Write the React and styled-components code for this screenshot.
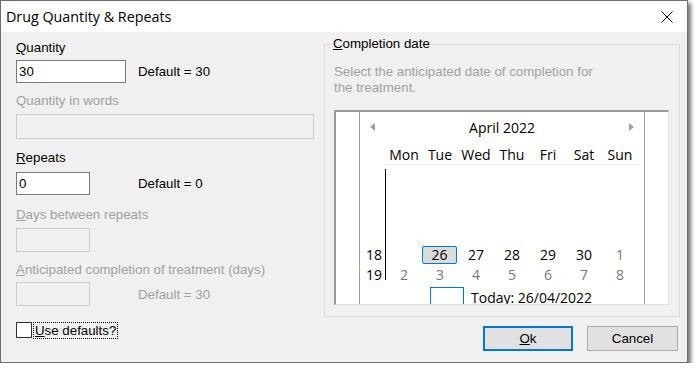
import React from 'react';
import styled, { createGlobalStyle } from 'styled-components';

const GlobalStyle = createGlobalStyle`
  body {
    margin: 0;
    background: #fff;
    font-family: "Liberation Sans", Arial, sans-serif;
  }
`;

const calFont = `"Open Sans", "Noto Sans", sans-serif`;

const Window = styled.div`
  width: 688px;
  height: 363px;
  box-sizing: border-box;
  border: 1px solid #6e6e6e;
  box-shadow: 3px 3px 4px rgba(0, 0, 0, 0.55);
  background: #f0f0f0;
  display: flex;
  flex-direction: column;
`;

const TitleBar = styled.div`
  height: 31px;
  flex: none;
  background: #fff;
  display: flex;
  align-items: center;
  justify-content: space-between;
  padding: 0 14px 0 5px;
  font-family: ${calFont};
  font-size: 14.3px;
  color: #000;
`;

const Body = styled.div`
  flex: 1;
  display: flex;
`;

const LeftColumn = styled.div`
  width: 323px;
  box-sizing: border-box;
  padding: 8px 0 0 15px;
`;

const Label = styled.div`
  font-size: 13.3px;
  line-height: 16px;
  height: 16px;
  color: ${p => (p.$disabled ? '#a0a0a0' : '#000')};
  margin-top: ${p => p.$gap || 0}px;
  white-space: nowrap;
`;

const InputRow = styled.div`
  display: grid;
  grid-template-columns: 122px auto;
  align-items: center;
  margin-top: ${p => p.$gap || 0}px;
`;

const TextBox = styled.div`
  box-sizing: border-box;
  width: ${p => p.$w}px;
  height: ${p => p.$h || 23}px;
  border: 1px solid ${p => (p.$disabled ? '#cccccc' : '#7a7a7a')};
  background: ${p => (p.$disabled ? '#f0f0f0' : '#fff')};
  font-size: 13.3px;
  line-height: 21px;
  padding-left: 2px;
`;

const Hint = styled.span`
  font-size: 13.3px;
  color: ${p => (p.$disabled ? '#a0a0a0' : '#000')};
`;

const CheckRow = styled.div`
  display: flex;
  align-items: center;
  gap: 2px;
  margin-top: 16px;
`;

const CheckBox = styled.div`
  width: 16px;
  height: 16px;
  box-sizing: border-box;
  border: 1px solid #333;
  background: #fff;
`;

const CheckLabel = styled.span`
  font-size: 13.3px;
  line-height: 15px;
  padding: 0 1px;
  outline: 1px dotted #000;
  outline-offset: 0;
`;

const RightColumn = styled.div`
  flex: 1;
  display: flex;
  flex-direction: column;
  padding-right: 7px;
`;

const GroupBox = styled.fieldset`
  margin: 4px 0 0 0;
  padding: 0 10px 11px 9px;
  border: 1px solid #dcdcdc;
  min-inline-size: 0;
`;

const Legend = styled.legend`
  font-size: 13.3px;
  line-height: 16px;
  padding: 0 2px;
  margin-left: -3px;
`;

const Description = styled.div`
  margin-top: 12px;
  font-size: 13.3px;
  line-height: 16px;
  color: #a0a0a0;
`;

const Calendar = styled.div`
  margin-top: 14px;
  width: 335px;
  height: 195px;
  box-sizing: border-box;
  border-top: 2px solid #9a9a9a;
  border-left: 2px solid #9a9a9a;
  border-right: 1px solid #e3e3e3;
  border-bottom: 1px solid #e3e3e3;
  background: #fff;
  display: flex;
  overflow: hidden;
`;

const Strip = styled.div`
  width: 23px;
  flex: none;
`;

const MonthPanel = styled.div`
  width: 286px;
  box-sizing: border-box;
  border-left: 1px solid #a0a0a0;
  border-right: 1px solid #a0a0a0;
  padding-top: 4px;
  font-family: ${calFont};
  font-size: 14px;
  color: #000;
`;

const MonthRow = styled.div`
  height: 22px;
  display: flex;
  align-items: center;
  justify-content: space-between;
  padding: 0 10px;
`;

const Arrow = styled.span`
  width: 0;
  height: 0;
  border-top: 4.5px solid transparent;
  border-bottom: 4.5px solid transparent;
  ${p => (p.$dir === 'left' ? 'border-right' : 'border-left')}: 5px solid #a0a0a0;
`;

const Grid = styled.div`
  display: grid;
  grid-template-columns: 26px repeat(7, 36px);
`;

const HeaderGrid = styled(Grid)`
  margin-top: 8px;
`;

const HeadCell = styled.div`
  height: 18px;
  line-height: 18px;
  text-align: center;
  border-bottom: ${p => (p.$blank ? 'none' : '1px solid #ebebeb')};
`;

const Weeks = styled.div`
  position: relative;

  &::before {
    content: '';
    position: absolute;
    left: 25px;
    top: 4px;
    bottom: 5px;
    width: 1px;
    background: #000;
  }
`;

const WeekRow = styled(Grid)`
  height: 20px;
  line-height: 20px;
`;

const WeekNum = styled.div`
  text-align: right;
  padding-right: 4px;
`;

const Day = styled.div`
  text-align: center;
  color: ${p => (p.$muted ? '#777' : '#000')};
`;

const Selected = styled.div`
  box-sizing: border-box;
  width: 35px;
  height: 18px;
  margin-top: 1px;
  line-height: 16px;
  background: #dcdcdc;
  border: 1px solid #0078d7;
  border-radius: 2px;
`;

const TodayRow = styled.div`
  display: flex;
  align-items: center;
  margin-top: 2px;
  padding-left: 70px;
`;

const TodayBox = styled.div`
  width: 34px;
  height: 20px;
  box-sizing: border-box;
  border: 1px solid #0078d7;
`;

const TodayText = styled.span`
  margin-left: 7px;
`;

const ButtonRow = styled.div`
  display: flex;
  justify-content: flex-end;
  gap: 14px;
  margin-top: 9px;
  padding-right: 2px;
`;

const Button = styled.div`
  box-sizing: border-box;
  width: ${p => p.$w}px;
  height: 25px;
  display: flex;
  align-items: center;
  justify-content: center;
  background: #e1e1e1;
  border: ${p => (p.$default ? '2px solid #0078d7' : '1px solid #adadad')};
  font-size: 13.3px;
`;

const days = ['Mon', 'Tue', 'Wed', 'Thu', 'Fri', 'Sat', 'Sun'];

function CloseIcon() {
  return (
    <svg width="12" height="12" viewBox="0 0 12 12">
      <path d="M0.5 0.5 L11.5 11.5 M11.5 0.5 L0.5 11.5" stroke="#000" strokeWidth="1" />
    </svg>
  );
}

export default function App() {
  return (
    <>
      <GlobalStyle />
      <Window>
        <TitleBar>
          <span>Drug Quantity &amp; Repeats</span>
          <CloseIcon />
        </TitleBar>
        <Body>
          <LeftColumn>
            <Label><u>Q</u>uantity</Label>
            <InputRow $gap={4}>
              <TextBox $w={110}>30</TextBox>
              <Hint>Default = 30</Hint>
            </InputRow>
            <Label $disabled $gap={10}>Quantity in words</Label>
            <InputRow $gap={5}>
              <TextBox $w={298} $h={25} $disabled />
            </InputRow>
            <Label $gap={11}><u>R</u>epeats</Label>
            <InputRow $gap={6}>
              <TextBox $w={74}>0</TextBox>
              <Hint>Default = 0</Hint>
            </InputRow>
            <Label $disabled $gap={12}><u>D</u>ays between repeats</Label>
            <InputRow $gap={5}>
              <TextBox $w={74} $h={24} $disabled />
            </InputRow>
            <Label $disabled $gap={10}><u>A</u>nticipated completion of treatment (days)</Label>
            <InputRow $gap={4}>
              <TextBox $w={74} $h={24} $disabled />
              <Hint $disabled>Default = 30</Hint>
            </InputRow>
            <CheckRow>
              <CheckBox />
              <CheckLabel><u>U</u>se defaults?</CheckLabel>
            </CheckRow>
          </LeftColumn>
          <RightColumn>
            <GroupBox>
              <Legend><u>C</u>ompletion date</Legend>
              <Description>
                Select the anticipated date of completion for
                <br />
                the treatment.
              </Description>
              <Calendar>
                <Strip />
                <MonthPanel>
                  <MonthRow>
                    <Arrow $dir="left" />
                    <span>April 2022</span>
                    <Arrow $dir="right" />
                  </MonthRow>
                  <HeaderGrid>
                    <HeadCell $blank />
                    {days.map(d => (
                      <HeadCell key={d}>{d}</HeadCell>
                    ))}
                  </HeaderGrid>
                  <Weeks>
                    {[14, 15, 16, 17].map(w => (
                      <WeekRow key={w} />
                    ))}
                    <WeekRow>
                      <WeekNum>18</WeekNum>
                      <Day />
                      <Day><Selected>26</Selected></Day>
                      <Day>27</Day>
                      <Day>28</Day>
                      <Day>29</Day>
                      <Day>30</Day>
                      <Day $muted>1</Day>
                    </WeekRow>
                    <WeekRow>
                      <WeekNum>19</WeekNum>
                      {[2, 3, 4, 5, 6, 7, 8].map(n => (
                        <Day key={n} $muted>{n}</Day>
                      ))}
                    </WeekRow>
                  </Weeks>
                  <TodayRow>
                    <TodayBox />
                    <TodayText>Today: 26/04/2022</TodayText>
                  </TodayRow>
                </MonthPanel>
                <Strip />
              </Calendar>
            </GroupBox>
            <ButtonRow>
              <Button $w={90} $default><u>O</u>k</Button>
              <Button $w={91}>Cancel</Button>
            </ButtonRow>
          </RightColumn>
        </Body>
      </Window>
    </>
  );
}
